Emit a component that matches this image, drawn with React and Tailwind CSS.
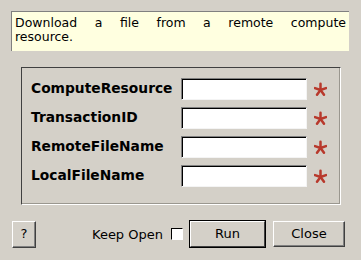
import React from 'react';

const fields = ['ComputeResource', 'TransactionID', 'RemoteFileName', 'LocalFileName'];

const Star = () => (
    <svg width="13" height="15" viewBox="0 0 13 15" className="block">
        <g stroke="#b8392c" strokeWidth="2.5" strokeLinecap="round">
            <line x1="6.5" y1="8" x2="6.5" y2="1.8" />
            <line x1="6.5" y1="8" x2="12" y2="6.1" />
            <line x1="6.5" y1="8" x2="1" y2="6.1" />
            <line x1="6.5" y1="8" x2="10" y2="12.8" />
            <line x1="6.5" y1="8" x2="3" y2="12.8" />
        </g>
    </svg>
);

const Field = ({ label }) => (
    <div className="flex items-center h-[22px]">
        <div className="w-[150px] shrink-0 text-[13.8px] font-bold text-black leading-none">{label}</div>
        <div className="w-[126px] shrink-0 h-[22px] bg-white border border-t-[#808080] border-l-[#808080] border-b-[#f4f4f4] border-r-[#f4f4f4] shadow-[inset_1px_1px_0_#000]" />
        <div className="ml-[7px] shrink-0">
            <Star />
        </div>
    </div>
);

const App = () => {
    return (
        <div className="w-[361px] h-[260px] bg-[#d4d0c8] flex flex-col font-['DejaVu_Sans',sans-serif] text-black overflow-hidden">
            <div className="ml-[11px] mt-[11px] w-[338px] h-[40px] bg-[#ffffe0] border-t border-l border-[#808080] pl-[3px] pr-[3px] pt-[4px] text-[12.5px] leading-[14px]">
                <div className="text-justify [text-align-last:justify]">Download a file from a remote compute</div>
                <div>resource.</div>
            </div>

            <div className="ml-[21px] mt-[16px] w-[320px] h-[138px] border border-t-[#404040] border-l-[#404040] border-b-white border-r-white shadow-[inset_-1px_-1px_0_#9a978f] pl-[9px] pt-[10px] flex flex-col gap-[7px]">
                {fields.map((f) => (
                    <Field key={f} label={f} />
                ))}
            </div>

            <div className="flex items-center mt-[15px] h-[28px]">
                <button className="shrink-0 ml-[12px] w-[24px] h-[27px] text-[13px] border border-t-white border-l-white border-b-[#404040] border-r-[#404040] shadow-[inset_-1px_-1px_0_#808080] flex items-center justify-center">
                    ?
                </button>
                <span className="shrink-0 ml-[56px] text-[13px] leading-none whitespace-nowrap">Keep Open</span>
                <div className="shrink-0 ml-[8px] w-[12px] h-[12px] bg-white border border-t-black border-l-black border-b-white border-r-white" />
                <button className="shrink-0 ml-[6px] w-[77px] h-[28px] border border-black flex">
                    <span className="flex-1 flex items-center justify-center text-[13px] border border-t-white border-l-white border-b-[#404040] border-r-[#404040]">Run</span>
                </button>
                <button className="shrink-0 ml-[7px] w-[72px] h-[26px] text-[13px] border border-t-white border-l-white border-b-[#404040] border-r-[#404040] shadow-[inset_-1px_-1px_0_#808080] flex items-center justify-center">
                    Close
                </button>
            </div>
        </div>
    );
};

export default App;
